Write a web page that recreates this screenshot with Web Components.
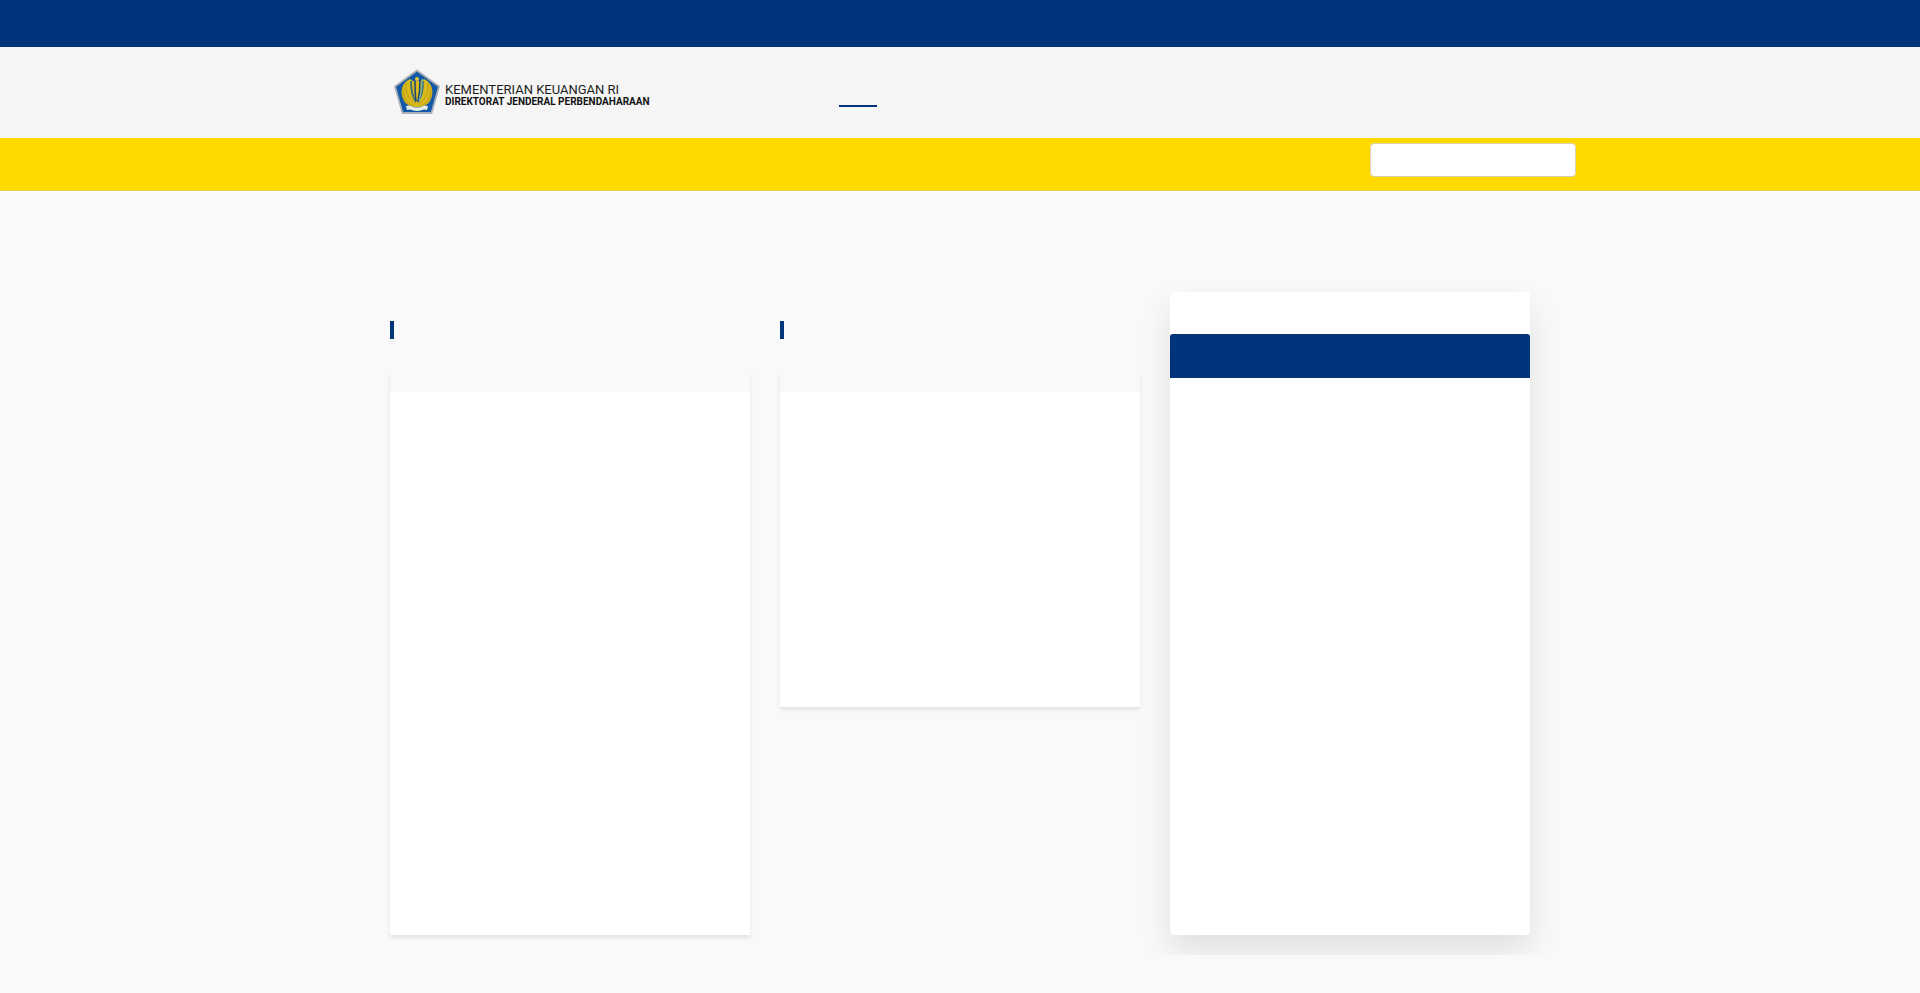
<!DOCTYPE html>
<html lang="id">
<head>
<meta charset="utf-8">
<meta name="viewport" content="width=device-width, initial-scale=1">
<title>Direktorat Jenderal Perbendaharaan</title>
<style>
:root { --navy: #00347b; --yellow: #ffd900; --page: #f9f9f9; }
body { margin: 0; background: var(--page); font-family: Roboto, "Liberation Sans", sans-serif; color: #222; }
</style>
</head>
<body>
<top-bar></top-bar>
<site-header>
  <brand-logo slot="brand"></brand-logo>
</site-header>
<search-strip></search-strip>
<content-columns>
  <news-column style="--body-height: 543px"></news-column>
  <news-column></news-column>
  <side-panel></side-panel>
</content-columns>

<script>
const define = (name, html) => {
  const template = document.createElement('template');
  template.innerHTML = html;
  customElements.define(name, class extends HTMLElement {
    constructor() {
      super();
      this.attachShadow({ mode: 'open' }).append(template.content.cloneNode(true));
    }
  });
};

define('top-bar', `
<style>:host { display: block; height: 47px; background: var(--navy); }</style>`);

define('brand-logo', `
<style>
:host { display: block; }
a { display: flex; align-items: center; gap: 4px; color: #1c1c1c; text-decoration: none; }
svg { display: block; width: 48px; height: 48px; padding-bottom: 2px; }
.words { display: flex; flex-direction: column; padding-top: 6px; white-space: nowrap; }
.top { font-size: 13px; line-height: 13px; }
.bottom { font-size: 10px; line-height: 12px; font-weight: 700; color: #111; }
</style>
<a href="#">
  <svg viewBox="0 0 48 48" aria-hidden="true">
    <path d="M24 2.500 46 18.500 38.500 45H9.500L2 18.500Z" fill="#1458a8" stroke="#a9b0b8" stroke-width="1.800" stroke-linejoin="round"/>
    <path d="M17 11C9 14 6 24 11 33 14 38 20 39 24 39s10-1 13-6c5-9 2-19-6-22l-3 2h-8Z" fill="#d9b91c"/>
    <path d="M10 19c0 8 3 15 10 19M13 15c-1 8 2 16 9 21M38 19c0 8-3 15-10 19M35 15c1 8-2 16-9 21M9 25c1 6 4 10 9 13M39 25c-1 6-4 10-9 13" fill="none" stroke="#b29313" stroke-width=".7"/>
    <path d="M18 13q0 14 5 21M30 13q0 14-5 21" fill="none" stroke="#3b6f79" stroke-width="1.800"/>
    <path d="M22 13q0 12 1 20M27 12q0 12-2 22" fill="none" stroke="#184575" stroke-width="1.500"/>
    <path d="M29 11q0 13-3 22" fill="none" stroke="#75b7b0" stroke-width="1.200"/>
    <circle cx="24" cy="11" r="2" fill="#e1c536"/>
    <path d="M13 38q4-1 5 0 6 3 12 0 1-1 5 0l-1 4q-3-1-5 0-5 2-10 0-2-1-5 0Z" fill="#e8eee5"/>
  </svg>
  <span class="words">
    <span class="top">KEMENTERIAN KEUANGAN RI</span>
    <span class="bottom">DIREKTORAT JENDERAL PERBENDAHARAAN</span>
  </span>
</a>`);

define('site-header', `
<style>
:host { display: block; background: #f5f5f5; }
.inner { box-sizing: border-box; max-width: 1140px; min-height: 91px; margin: 0 auto; padding: 0 3px; display: flex; align-items: center; }
.brand { flex: 0 0 446px; }
nav a { display: block; width: 38px; height: 26px; border-bottom: 2px solid var(--navy); }
</style>
<header class="inner">
  <div class="brand"><slot name="brand"></slot></div>
  <nav aria-label="Utama"><a href="#" aria-label="Beranda"></a></nav>
</header>`);

define('search-strip', `
<style>
:host { display: block; background: var(--yellow); border-bottom: 1px solid #ecd24a; }
form { box-sizing: border-box; max-width: 1232px; min-height: 52px; margin: 0 auto; padding: 5px 0 13px; display: flex; justify-content: flex-end; }
input { box-sizing: border-box; width: 206px; height: 34px; padding: 6px 12px; border: 1px solid #d9d2ac; border-radius: 4px; background: #fff; font: inherit; }
</style>
<form role="search"><input type="search" aria-label="Cari"></form>`);

define('content-columns', `
<style>
:host { display: block; overflow: hidden; padding: 101px 0 20px; }
main { max-width: 1140px; margin: 0 auto; display: grid; grid-template-columns: repeat(3, minmax(0, 1fr)); gap: 30px; align-items: start; }
</style>
<main><slot></slot></main>`);

define('news-column', `
<style>
:host { display: block; padding-top: 29px; }
.mark { width: 4px; height: 18px; background: var(--navy); }
.card { margin-top: 33px; box-shadow: 0 3px 4px rgba(0, 0, 0, .09); background: #fff; clip-path: inset(0 -8px -8px -8px); }
.media { height: 20px; background: var(--page); }
.body { min-height: var(--body-height, 315px); }
</style>
<div class="mark"></div>
<article class="card"><div class="media"></div><div class="body"></div></article>`);

define('side-panel', `
<style>
:host { display: block; background: #fff; border-radius: 4px; box-shadow: 0 16px 32px rgba(0, 0, 0, .1); }
.lead { height: 42px; }
.title { height: 44px; background: var(--navy); border-radius: 3px 3px 0 0; }
.body { min-height: 557px; }
</style>
<div class="lead"></div>
<div class="title"></div>
<div class="body"></div>`);
</script>
</body>
</html>
